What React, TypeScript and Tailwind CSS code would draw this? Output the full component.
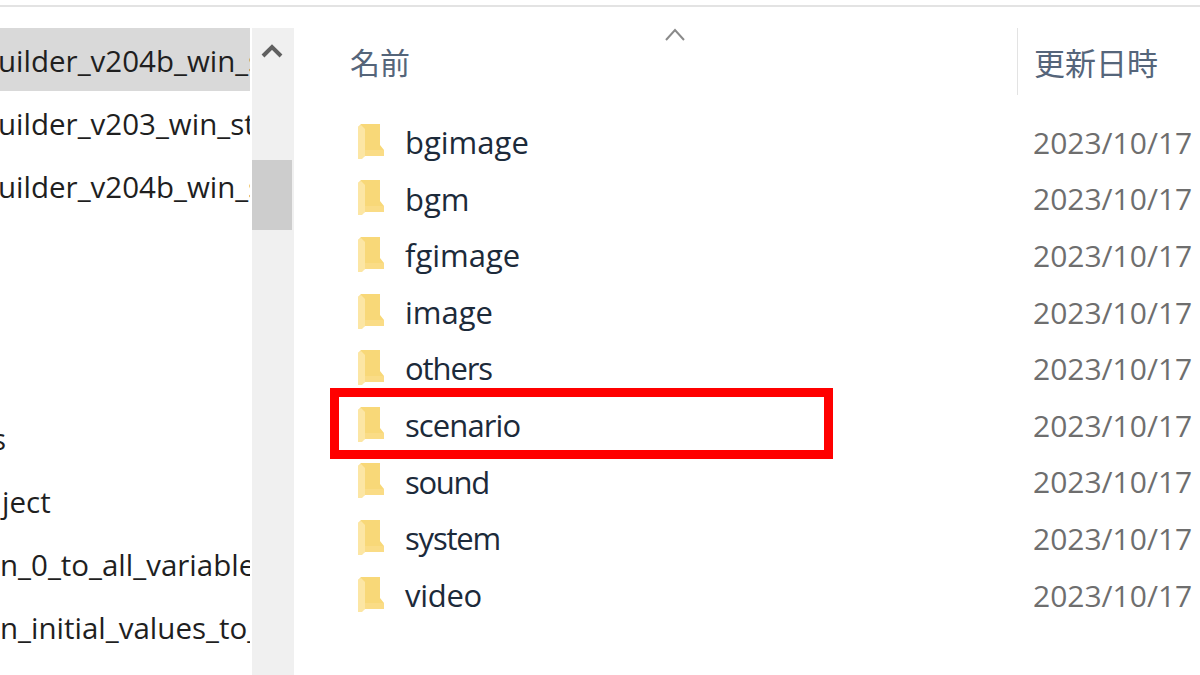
const font = { fontFamily: '"Open Sans", "Noto Sans CJK JP", sans-serif' };

const leftRows: { t: string; ml: string; sel?: boolean }[] = [
  { t: "uilder_v204b_win_s", ml: "ml-[-2px]", sel: true },
  { t: "uilder_v203_win_st", ml: "ml-[-2px]" },
  { t: "uilder_v204b_win_s", ml: "ml-[-2px]" },
  { t: "", ml: "" },
  { t: "", ml: "" },
  { t: "", ml: "" },
  { t: "s", ml: "ml-[-8px]" },
  { t: "ject", ml: "ml-[2px]" },
  { t: "n_0_to_all_variable", ml: "ml-[0px]" },
  { t: "n_initial_values_to_", ml: "ml-[0px]" },
];

const folders: { n: string; c: string }[] = [
  { n: "bgimage", c: "" },
  { n: "bgm", c: "" },
  { n: "fgimage", c: "" },
  { n: "image", c: "" },
  { n: "others", c: "tracking-[-1.1px]" },
  { n: "scenario", c: "tracking-[-0.9px]" },
  { n: "sound", c: "tracking-[-1.3px]" },
  { n: "system", c: "tracking-[-1.2px]" },
  { n: "video", c: "tracking-[-0.3px]" },
];

function Folder() {
  return (
    <svg width="28" height="36" viewBox="0 0 28 36" className="shrink-0">
      <path d="M2 4 L5 1 L24 1 L24 22 L28 27 L28 33 L9 33 L2 36 Z" fill="#f8d878" />
      <path d="M2 4 L5 2 L9 6 L9 33 L6 36 L2 36 Z" fill="#fce6a4" />
      <path d="M9 33 L28 33 L28 27 L9 27 Z" fill="#fadc86" />
    </svg>
  );
}

export default function App() {
  return (
    <div className="w-[1200px] h-[675px] overflow-hidden bg-white flex flex-col" style={font}>
      <div className="h-[5px] shrink-0" />
      <div className="h-[2px] shrink-0 bg-[#e3e3e3]" />
      <div className="flex flex-1 pt-[21px] min-h-0">
        <div className="w-[252px] shrink-0 pr-[2px]">
          {leftRows.map((r, i) => (
            <div
              key={i}
              className={`h-[63px] flex items-center pt-[3px] overflow-hidden whitespace-nowrap text-[29.5px] text-[#1f1f1f] ${r.sel ? "bg-[#d9d9d9]" : ""}`}
            >
              <span className={r.ml}>{r.t}</span>
            </div>
          ))}
        </div>
        <div className="w-[42px] shrink-0 bg-[#f0f0f0] flex flex-col">
          <div className="h-[132px] shrink-0 flex justify-center pt-[14px] pr-[2px]">
            <svg width="22" height="18" viewBox="0 0 22 18">
              <path d="M2 14 L11 5 L20 14" fill="none" stroke="#606060" strokeWidth="4" />
            </svg>
          </div>
          <div className="h-[70px] w-[40px] bg-[#cdcdcd]" />
        </div>
        <div className="flex-1 flex flex-col pl-[56px] relative">
          <div className="h-[67px] flex shrink-0 relative">
            <div className="w-[667px] pt-[12px] text-[30px] text-[#55657a]">名前</div>
            <div className="border-l border-[#e3e3e3] pl-[16px] pt-[12px] text-[31px] text-[#55657a] whitespace-nowrap">
              更新日時
            </div>
            <svg width="22" height="14" viewBox="0 0 22 14" className="absolute left-[314px] top-[0px]">
              <path d="M2 12 L11 2 L20 12" fill="none" stroke="#8a8a8a" strokeWidth="2" />
            </svg>
          </div>
          <div className="pt-[19px]">
            {folders.map((f) => (
              <div key={f.n} className="h-[56.6px] flex items-center whitespace-nowrap">
                <div className="w-[55px] flex pl-[6px] mt-[-3px]">
                  <Folder />
                </div>
                <div className={`w-[628px] text-[31px] text-[#1c2a3a] ${f.c}`}>{f.n}</div>
                <div className="text-[30px] text-[#6e6e6e]">2023/10/17</div>
              </div>
            ))}
          </div>
          <div className="absolute left-[36px] top-[360px] w-[503px] h-[71px] border-[9px] border-[#ff0000]" />
        </div>
      </div>
    </div>
  );
}
